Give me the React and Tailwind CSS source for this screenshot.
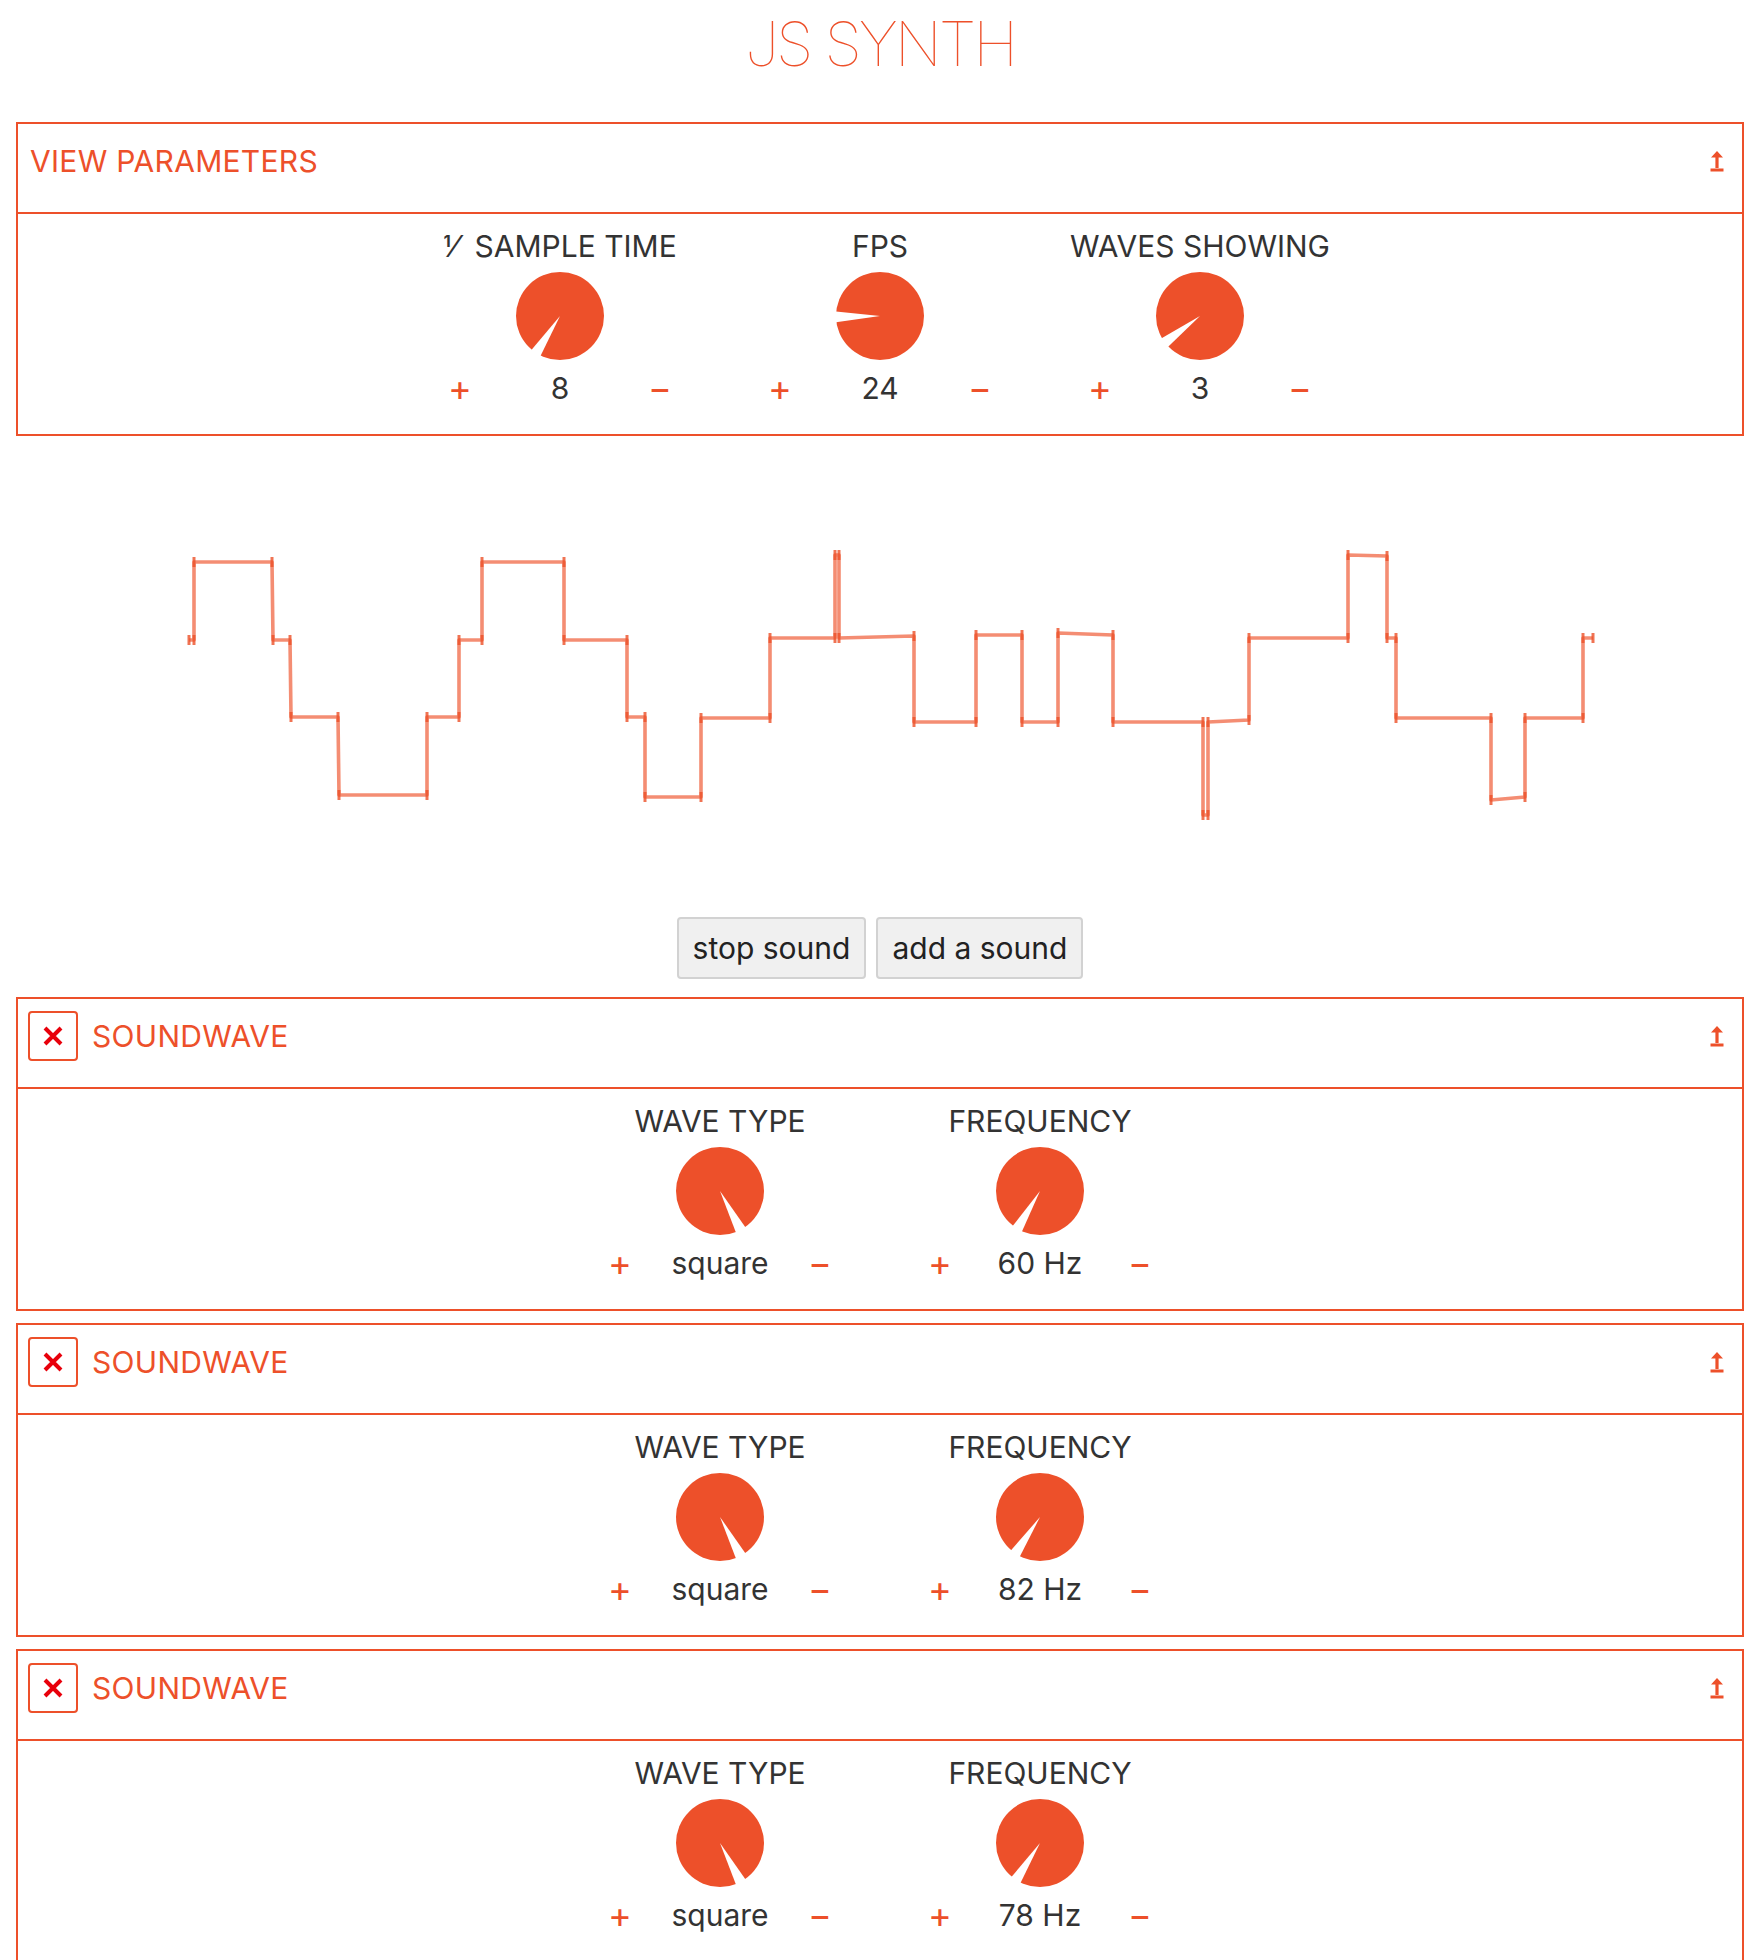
import React from "react";

// oscilloscope trace, in page coordinates
const trace = [
  [189, 640], [194, 640], [194, 562], [272, 562], [273, 640], [290, 640], [291, 717], [338, 717],
  [339, 795], [427, 795], [427, 717], [459, 717], [459, 640], [482, 640], [482, 562], [564, 562],
  [564, 640], [627, 640], [627, 717], [645, 717], [645, 797], [701, 797], [701, 718], [770, 718],
  [770, 638], [835, 638], [835, 555], [839, 555], [839, 638], [914, 636], [914, 722], [976, 722],
  [976, 635], [1022, 635], [1022, 722], [1058, 722], [1058, 633], [1113, 635], [1113, 722], [1203, 722],
  [1203, 815], [1208, 815], [1208, 722], [1249, 720], [1249, 638], [1348, 638], [1348, 555], [1387, 556],
  [1387, 638], [1396, 638], [1396, 718], [1491, 718], [1491, 800], [1525, 797], [1525, 718], [1583, 718],
  [1583, 638], [1593, 638],
];

const sounds = [
  { freq: "60 Hz", angle: 121 },
  { freq: "82 Hz", angle: 124 },
  { freq: "78 Hz", angle: 123 },
];

function Knob({ angle }) {
  const c = 44;
  const pt = (a, d) => {
    const t = (a * Math.PI) / 180;
    return `${c + d * Math.cos(t)},${c + d * Math.sin(t)}`;
  };
  return (
    <svg width="88" height="88" viewBox="0 0 88 88" className="block">
      <circle cx={c} cy={c} r="44" fill="#ed502a" />
      <polygon points={`${c},${c} ${pt(angle - 7, 54)} ${pt(angle + 7, 54)}`} fill="#fff" />
    </svg>
  );
}

function Control({ label, value, angle }) {
  return (
    <div className="w-[320px] flex flex-col items-center">
      <div className="text-[30px] leading-[36px] text-[#333] whitespace-pre">{label}</div>
      <div className="mt-[8px]">
        <Knob angle={angle} />
      </div>
      <div className="mt-[10px] flex items-center text-[30px] leading-[36px]">
        <button className="w-[40px] text-center text-[36px] text-[#ed502a]">+</button>
        <span className="w-[160px] text-center text-[#333]">{value}</span>
        <button className="w-[40px] text-center text-[36px] text-[#ed502a]">−</button>
      </div>
    </div>
  );
}

function Collapse() {
  return (
    <svg width="14" height="21" viewBox="0 0 14 21" className="block">
      <polygon points="7,0 13,6.5 8.6,6.5 8.6,17 5.4,17 5.4,6.5 1,6.5" fill="#ed502a" />
      <rect x="0.5" y="17.5" width="13" height="3" fill="#ed502a" />
    </svg>
  );
}

function Panel({ title, removable, className = "", children }) {
  return (
    <section className={"mx-4 border-2 border-[#ed502a] " + className}>
      <header
        className={
          "h-[90px] border-b-2 border-[#ed502a] flex items-start pt-[12px] pr-[18px] " +
          (removable ? "pl-[10px]" : "pl-[12px]")
        }
      >
        <div className="h-[50px] flex items-center flex-1">
          {removable && (
            <button className="w-[50px] h-[50px] mr-[14px] border-2 border-[#ed502a] rounded-[4px] flex items-center justify-center">
              <svg width="20" height="20" viewBox="0 0 20 20">
                <path d="M2 2 L18 18 M18 2 L2 18" stroke="#e8000b" strokeWidth="4" />
              </svg>
            </button>
          )}
          <span className="text-[30px] leading-[36px] text-[#ed502a] tracking-[0.01em]">{title}</span>
        </div>
        <div className="h-[50px] flex items-center">
          <Collapse />
        </div>
      </header>
      <div className="h-[220px] pt-[14px] flex justify-center">{children}</div>
    </section>
  );
}

export default function App() {
  const pts = trace.map(([x, y]) => `${x},${y}`).join(" ");

  return (
    <div className="w-[1760px] h-[1960px] overflow-hidden bg-white font-[Inter,'DejaVu_Sans',sans-serif]">
      <h1 className="pt-[13px] mb-[47px] text-center text-[61px] leading-[62px] font-thin tracking-[-0.05em] text-[#ed502a]">
        JS SYNTH
      </h1>

      <Panel title="VIEW PARAMETERS">
        <Control label="⅟  SAMPLE TIME" value="8" angle={123} />
        <Control label="FPS" value="24" angle={179} />
        <Control label="WAVES SHOWING" value="3" angle={143} />
      </Panel>

      {/* scope */}
      <svg width="1760" height="472" viewBox="0 436 1760 472" className="block">
        <polyline points={pts} fill="none" stroke="#ef5d38" strokeOpacity="0.7" strokeWidth="3.6" strokeLinejoin="round" />
        {trace.map(([x, y], i) => (
          <line key={i} x1={x} y1={y - 5} x2={x} y2={y + 5} stroke="#ec5028" strokeOpacity="0.8" strokeWidth="3" />
        ))}
      </svg>

      <div className="mt-[9px] mb-[18px] flex justify-center gap-[10px]">
        <button className="h-[62px] px-[14px] bg-[#f0f0f0] border-2 border-[#d2d2d2] rounded-[4px] text-[30px] text-[#222]">
          stop sound
        </button>
        <button className="h-[62px] px-[14px] bg-[#f0f0f0] border-2 border-[#d2d2d2] rounded-[4px] text-[30px] text-[#222]">
          add a sound
        </button>
      </div>

      <div className="flex flex-col gap-[12px]">
        {sounds.map((s, i) => (
          <Panel key={i} title="SOUNDWAVE" removable>
            <Control label="WAVE TYPE" value="square" angle={62} />
            <Control label="FREQUENCY" value={s.freq} angle={s.angle} />
          </Panel>
        ))}
      </div>
    </div>
  );
}
